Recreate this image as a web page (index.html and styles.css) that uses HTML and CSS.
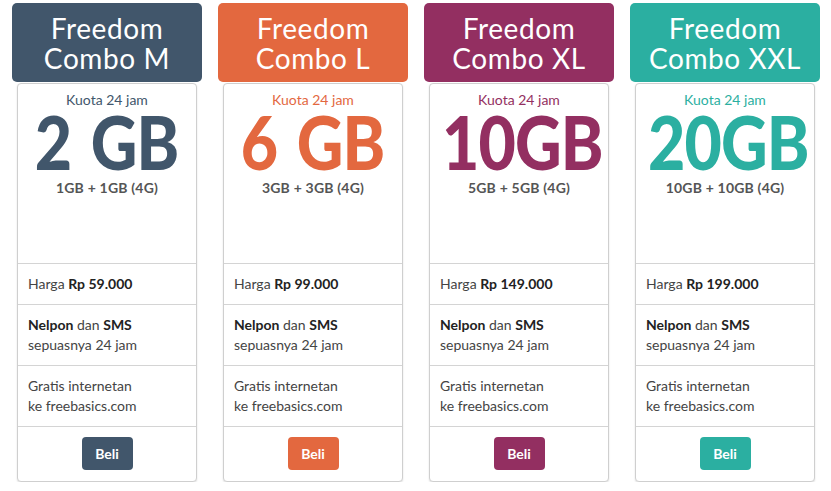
FILE: index.html
```html
<!DOCTYPE html>
<html>
<head>
<meta charset="utf-8">
<link rel="stylesheet" href="styles.css">
</head>
<body>
<div class="plans">
  <div class="plan slate">
    <div class="head">Freedom<br>Combo M</div>
    <div class="card">
      <div class="top">
        <div class="kuota">Kuota 24 jam</div>
        <div class="big"><span>2 GB</span></div>
        <div class="split">1GB + 1GB (4G)</div>
      </div>
      <div class="row price">Harga <b>Rp 59.000</b></div>
      <div class="row feat"><b>Nelpon</b> dan <b>SMS</b><br>sepuasnya 24 jam</div>
      <div class="row feat">Gratis internetan<br>ke freebasics.com</div>
      <div class="row buy"><span class="btn">Beli</span></div>
    </div>
  </div>
  <div class="plan orange">
    <div class="head">Freedom<br>Combo L</div>
    <div class="card">
      <div class="top">
        <div class="kuota">Kuota 24 jam</div>
        <div class="big"><span>6 GB</span></div>
        <div class="split">3GB + 3GB (4G)</div>
      </div>
      <div class="row price">Harga <b>Rp 99.000</b></div>
      <div class="row feat"><b>Nelpon</b> dan <b>SMS</b><br>sepuasnya 24 jam</div>
      <div class="row feat">Gratis internetan<br>ke freebasics.com</div>
      <div class="row buy"><span class="btn">Beli</span></div>
    </div>
  </div>
  <div class="plan purple">
    <div class="head">Freedom<br>Combo XL</div>
    <div class="card">
      <div class="top">
        <div class="kuota">Kuota 24 jam</div>
        <div class="big"><span>10GB</span></div>
        <div class="split">5GB + 5GB (4G)</div>
      </div>
      <div class="row price">Harga <b>Rp 149.000</b></div>
      <div class="row feat"><b>Nelpon</b> dan <b>SMS</b><br>sepuasnya 24 jam</div>
      <div class="row feat">Gratis internetan<br>ke freebasics.com</div>
      <div class="row buy"><span class="btn">Beli</span></div>
    </div>
  </div>
  <div class="plan teal">
    <div class="head">Freedom<br>Combo XXL</div>
    <div class="card">
      <div class="top">
        <div class="kuota">Kuota 24 jam</div>
        <div class="big"><span>20GB</span></div>
        <div class="split">10GB + 10GB (4G)</div>
      </div>
      <div class="row price">Harga <b>Rp 199.000</b></div>
      <div class="row feat"><b>Nelpon</b> dan <b>SMS</b><br>sepuasnya 24 jam</div>
      <div class="row feat">Gratis internetan<br>ke freebasics.com</div>
      <div class="row buy"><span class="btn">Beli</span></div>
    </div>
  </div>
</div>
</body>
</html>
```
FILE: styles.css
```css
html, body {
  margin: 0;
  padding: 0;
  background: #fff;
}
body {
  font-family: Lato, "Noto Sans", sans-serif;
  color: #444;
}
.plans {
  display: grid;
  grid-template-columns: repeat(4, 206px);
  padding: 3px 0 0 4px;
}
.plan {
  padding: 0 8px;
}
.slate { --c: #41566b; }
.orange { --c: #e3683f; }
.purple { --c: #932f61; }
.teal { --c: #2bafa1; }

.head {
  background: var(--c);
  color: #fff;
  height: 79px;
  border-radius: 5px;
  box-sizing: border-box;
  padding-top: 10px;
  text-align: center;
  font-size: 28px;
  line-height: 30px;
  font-weight: 400;
  letter-spacing: 0.6px;
}
.card {
  margin: 1px 5px 0;
  border: 1px solid #cfcfcf;
  border-radius: 4px;
  box-shadow: 0 1px 2px rgba(0,0,0,0.12);
  background: #fff;
}
.top {
  height: 179px;
  text-align: center;
  padding-top: 7px;
  box-sizing: border-box;
}
.kuota {
  color: var(--c);
  font-size: 14px;
  line-height: 17px;
}
.big {
  color: var(--c);
  font-size: 74px;
  font-weight: 900;
  line-height: 58px;
  height: 58px;
  margin-top: 5px;
}
.big span {
  display: inline-block;
  transform: scaleX(0.87);
  letter-spacing: -1px;
  word-spacing: 6px;
}
.split {
  color: #555;
  font-size: 14px;
  font-weight: 700;
  line-height: 17px;
  margin-top: 8px;
  letter-spacing: 0.2px;
}
.row {
  border-top: 1px solid #d4d4d4;
  padding: 0 10px;
  font-size: 14px;
  line-height: 20px;
  box-sizing: border-box;
}
.row b {
  font-weight: 700;
  color: #222;
}
.price {
  height: 41px;
  padding-top: 10px;
}
.feat {
  height: 61px;
  padding-top: 10px;
}
.buy {
  height: 55px;
  display: flex;
  justify-content: center;
  padding-top: 10px;
}
.btn {
  background: var(--c);
  color: #fff;
  font-weight: 700;
  font-size: 14px;
  width: 51px;
  height: 33px;
  line-height: 33px;
  text-align: center;
  border-radius: 4px;
}
```
